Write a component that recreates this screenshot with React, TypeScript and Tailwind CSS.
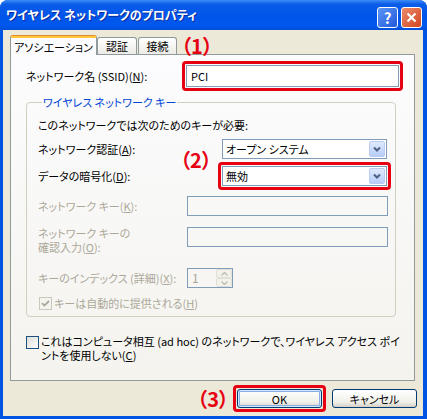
import React from "react";

// XP-style dropdown with the light blue arrow button
function ComboBox({ value, width }: { value: string; width: string }) {
  return (
    <div
      className={`${width} flex h-[20px] items-center border border-[#7F9DB9] bg-white pl-[3px]`}
    >
      <span className="leading-[14px]">{value}</span>
      <div className="mr-[1px] ml-auto flex h-[16px] w-[16px] items-center justify-center rounded-[2px] border border-[#B9CBF3] bg-[linear-gradient(to_bottom,#E0EAFE,#B7CDF8)]">
        <svg width="8" height="6" viewBox="0 0 8 6">
          <path d="M1 1.5 L4 4.5 L7 1.5" fill="none" stroke="#4D6185" strokeWidth="2" />
        </svg>
      </div>
    </div>
  );
}

function DisabledInput({ className = "" }: { className?: string }) {
  return <div className={`h-[20px] w-[201px] border border-[#7F9DB9] ${className}`} />;
}

function Checkbox({ checked, disabled }: { checked?: boolean; disabled?: boolean }) {
  return (
    <div
      className={
        disabled
          ? "flex h-[13px] w-[13px] shrink-0 items-center justify-center border border-[#CAC8BB] bg-[#F4F3EE]"
          : "flex h-[13px] w-[13px] shrink-0 items-center justify-center border border-[#1C5180] bg-[linear-gradient(135deg,#DCDCD7,#FFFFFF)]"
      }
    >
      {checked && (
        <svg width="9" height="9" viewBox="0 0 9 9">
          <path
            d="M1 4.2 L3.4 6.6 L8 2"
            fill="none"
            stroke={disabled ? "#ACA899" : "#21A121"}
            strokeWidth="1.8"
          />
        </svg>
      )}
    </div>
  );
}

function XPButton({ label, isDefault }: { label: string; isDefault?: boolean }) {
  return (
    <div
      className={`flex h-[19px] w-[85px] items-center justify-center rounded-[3px] border border-[#003C74] bg-[linear-gradient(to_bottom,#FFFFFF,#F0F0EA_70%,#D6D0C5)] leading-[14px] ${
        isDefault ? "shadow-[inset_0_0_0_1px_#CEE7FF,inset_0_0_0_2px_#89ADE4]" : ""
      }`}
    >
      {label}
    </div>
  );
}

const Red = ({ children, className = "" }: { children: React.ReactNode; className?: string }) => (
  <span className={`text-[20px] leading-[22px] font-bold text-[#E60012] ${className}`}>
    {children}
  </span>
);

export default function App() {
  return (
    <div className="flex h-[419px] w-[427px] flex-col overflow-hidden rounded-t-[8px] bg-[#0054E3] font-['Noto_Sans_CJK_JP',sans-serif] text-[11px] whitespace-nowrap text-black [font-feature-settings:'palt']">
      {/* Title bar */}
      <div className="flex h-[30px] shrink-0 items-start bg-[linear-gradient(to_bottom,#3D8DF5_0%,#0A5CE8_14%,#0055EA_55%,#0058EE_85%,#004FD8_100%)]">
        <span className="mt-[6px] ml-[6px] text-[12px] leading-[18px] font-bold text-white [text-shadow:1px_1px_0_#0A2A9C]">
          ワイヤレス ネットワークのプロパティ
        </span>
        <div className="mt-[7px] mr-[5px] ml-auto flex gap-[3px]">
          <div className="flex h-[21px] w-[21px] items-center justify-center rounded-[3px] border border-white bg-[linear-gradient(135deg,#5A96F8,#2259DA)] text-[15px] leading-none font-bold text-white">
            ?
          </div>
          <div className="flex h-[21px] w-[21px] items-center justify-center rounded-[3px] border border-white bg-[linear-gradient(135deg,#EC8B6B,#D2461F)]">
            <svg width="11" height="11" viewBox="0 0 11 11">
              <path d="M1.5 1.5 L9.5 9.5 M9.5 1.5 L1.5 9.5" stroke="white" strokeWidth="2.2" />
            </svg>
          </div>
        </div>
      </div>

      {/* Body */}
      <div className="mr-[4px] mb-[3px] ml-[3px] flex flex-1 flex-col bg-[#ECE9D8]">
        {/* Tabs */}
        <div className="relative z-10 mt-[5px] flex h-[19px] items-end pl-[7px]">
          <div className="relative -mb-[1px] flex h-[20px] w-[87px] flex-col rounded-t-[3px] border border-b-0 border-[#919B9C] border-t-[#E68B2C] bg-[#FCFCFE]">
            <div className="h-[2px] bg-[#FFC73C]" />
            <div className="flex flex-1 items-center justify-center leading-[14px]">アソシエーション</div>
          </div>
          <div className="flex h-[17px] w-[40px] items-center justify-center rounded-t-[3px] border border-b-0 border-[#919B9C] bg-[linear-gradient(to_bottom,#FFFFFF,#ECEBE6)] leading-[14px]">
            認証
          </div>
          <div className="ml-[1px] flex h-[17px] w-[39px] items-center justify-center rounded-t-[3px] border border-b-0 border-[#919B9C] bg-[linear-gradient(to_bottom,#FFFFFF,#ECEBE6)] leading-[14px]">
            接続
          </div>
          <Red className="relative -mb-[3px] ml-[4px]">（1）</Red>
        </div>

        {/* Tab panel */}
        <div className="ml-[7px] flex h-[327px] w-[405px] flex-col border border-[#919B9C] bg-[linear-gradient(to_bottom,#FCFCFE,#F4F3EE)] pt-[6px] pl-[15px]">
          <div className="flex h-[30px] items-center">
            <span className="w-[156px] leading-[14px]">
              ネットワーク名 (SSID)(<u>N</u>):
            </span>
            <div className="rounded-[4px] border-[3px] border-[#E60012] p-[1px]">
              <div className="flex h-[22px] w-[213px] items-center border border-[#7F9DB9] bg-white pl-[4px] leading-[14px]">
                PCI
              </div>
            </div>
          </div>

          <fieldset className="mt-[4px] w-[370px] rounded-[4px] border border-[#D0D0BF] pb-[6px] pl-[11px]">
            <legend className="ml-[4px] px-[1px] leading-[14px] text-[#0046D5]">
              ワイヤレス ネットワーク キー
            </legend>
            <div className="mt-[9px] leading-[14px]">このネットワークでは次のためのキーが必要:</div>

            <div className="mt-[7px] flex h-[20px] items-center">
              <span className="w-[184px] leading-[14px]">
                ネットワーク認証(<u>A</u>):
              </span>
              <ComboBox value="オープン システム" width="w-[165px]" />
            </div>

            <div className="relative mt-[3px] flex h-[28px] items-center">
              <span className="w-[180px] leading-[14px]">
                データの暗号化(<u>D</u>):
              </span>
              <div className="rounded-[4px] border-[3px] border-[#E60012] p-[1px]">
                <ComboBox value="無効" width="w-[165px]" />
              </div>
              <Red className="absolute top-[-13px] left-[142px]">（2）</Red>
            </div>

            <div className="mt-[6px] flex h-[20px] items-center text-[#ACA899]">
              <span className="w-[149px] leading-[14px]">
                ネットワーク キー(<u>K</u>):
              </span>
              <DisabledInput />
            </div>

            <div className="mt-[10px] flex items-start text-[#ACA899]">
              <span className="w-[149px] leading-[14px]">
                ネットワーク キーの
                <br />
                確認入力(<u>O</u>):
              </span>
              <DisabledInput className="mt-[1px]" />
            </div>

            <div className="mt-[14px] flex h-[20px] items-center text-[#ACA899]">
              <span className="w-[149px] leading-[14px]">
                キーのインデックス (詳細)(<u>X</u>):
              </span>
              <div className="flex h-[20px] w-[46px] items-stretch border border-[#7F9DB9]">
                <span className="flex-1 pl-[4px] text-[12px] leading-[18px]">1</span>
                <div className="flex w-[16px] flex-col">
                  <div className="flex flex-1 items-center justify-center rounded-[2px] border border-[#E2E0D6] bg-[#F2F1EC]">
                    <svg width="7" height="4" viewBox="0 0 7 4">
                      <path d="M0.5 3.5 L3.5 0.5 L6.5 3.5" fill="none" stroke="#C5C2B2" strokeWidth="1.5" />
                    </svg>
                  </div>
                  <div className="flex flex-1 items-center justify-center rounded-[2px] border border-[#E2E0D6] bg-[#F2F1EC]">
                    <svg width="7" height="4" viewBox="0 0 7 4">
                      <path d="M0.5 0.5 L3.5 3.5 L6.5 0.5" fill="none" stroke="#C5C2B2" strokeWidth="1.5" />
                    </svg>
                  </div>
                </div>
              </div>
            </div>

            <div className="mt-[8px] flex h-[14px] items-center pl-[1px] text-[#ACA899]">
              <Checkbox checked disabled />
              <span className="ml-[2px] leading-[14px]">
                キーは自動的に提供される(<u>H</u>)
              </span>
            </div>
          </fieldset>

          <div className="mt-[17px] flex items-start">
            <div className="mt-[2px]">
              <Checkbox />
            </div>
            <span className="ml-[2px] leading-[14px]">
              これはコンピュータ相互 (ad hoc) のネットワークで、ワイヤレス アクセス ポイ
              <br />
              ントを使用しない(<u>C</u>)
            </span>
          </div>
        </div>

        {/* Dialog buttons */}
        <div className="mt-[4px] flex items-center justify-end pr-[6px]">
          <Red className="mr-[4px]">（3）</Red>
          <div className="rounded-[4px] border-[3px] border-[#E60012] p-[1px]">
            <XPButton label="OK" isDefault />
          </div>
          <div className="ml-[6px]">
            <XPButton label="キャンセル" />
          </div>
        </div>
      </div>
    </div>
  );
}
